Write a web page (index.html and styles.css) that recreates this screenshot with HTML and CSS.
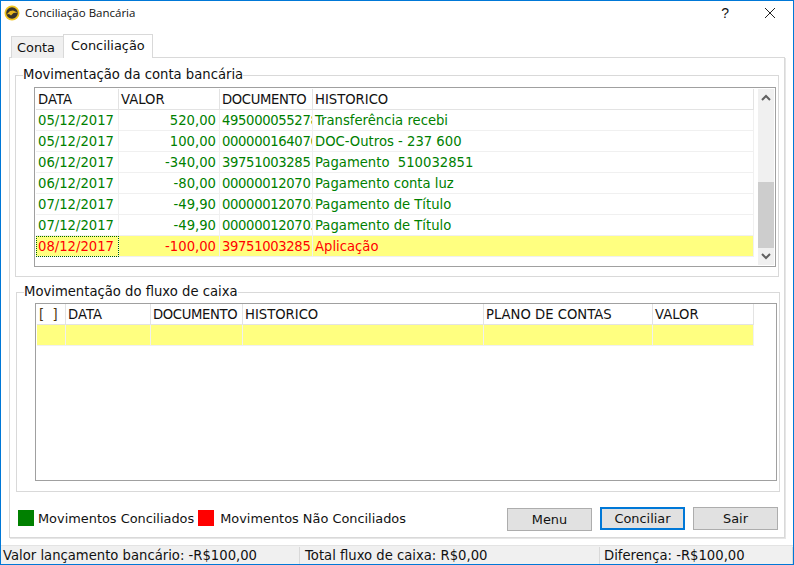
FILE: index.html
```html
<!DOCTYPE html>
<html lang="pt">
<head>
<meta charset="utf-8">
<title>Conciliação Bancária</title>
<link rel="stylesheet" href="styles.css">
</head>
<body>
<div class="window">
  <header class="titlebar">
    <svg class="app-icon" width="16" height="16" viewBox="0 0 16 16"><circle cx="8" cy="8" r="7.5" fill="#f0c41e"/><circle cx="8" cy="8" r="5.8" fill="#37332b"/><path d="M2.5 9.5 L6 6 L9 5.5 L13.5 7.5 L9.5 8 L7 10.5 L5 9 Z" fill="#e8b81c"/></svg>
    <span class="title">Conciliação Bancária</span>
    <span class="help">?</span>
    <svg class="close" width="10" height="10" viewBox="0 0 10 10"><path d="M0 0 L10 10 M10 0 L0 10" stroke="#222" stroke-width="1" fill="none"/></svg>
  </header>
  <div class="tabs">
    <div class="tab">Conta</div>
    <div class="tab active">Conciliação</div>
  </div>
  <main class="page">
    <fieldset class="group group-a">
      <legend>Movimentação da conta bancária</legend>
      <div class="grid grid-a">
        <div class="rows">
          <div class="row head"><span class="c a1">DATA</span><span class="c a2">VALOR</span><span class="c a3">DOCUMENTO</span><span class="c a4">HISTORICO</span></div>
          <div class="row ok"><span class="c a1">05/12/2017</span><span class="c a2 num">520,00</span><span class="c a3">49500005527885</span><span class="c a4">Transferência recebi</span></div>
          <div class="row ok"><span class="c a1">05/12/2017</span><span class="c a2 num">100,00</span><span class="c a3">00000016407600</span><span class="c a4">DOC-Outros - 237 600</span></div>
          <div class="row ok"><span class="c a1">06/12/2017</span><span class="c a2 num">-340,00</span><span class="c a3">39751003285</span><span class="c a4">Pagamento &nbsp;510032851</span></div>
          <div class="row ok"><span class="c a1">06/12/2017</span><span class="c a2 num">-80,00</span><span class="c a3">00000012070</span><span class="c a4">Pagamento conta luz</span></div>
          <div class="row ok"><span class="c a1">07/12/2017</span><span class="c a2 num">-49,90</span><span class="c a3">00000012070322</span><span class="c a4">Pagamento de Título</span></div>
          <div class="row ok"><span class="c a1">07/12/2017</span><span class="c a2 num">-49,90</span><span class="c a3">00000012070322</span><span class="c a4">Pagamento de Título</span></div>
          <div class="row bad"><span class="c a1 focus">08/12/2017</span><span class="c a2 num">-100,00</span><span class="c a3">39751003285</span><span class="c a4">Aplicação</span></div>
        </div>
        <div class="scrollbar">
          <svg class="arrow" width="16" height="17" viewBox="0 0 16 17"><path d="M4 11 L8 7 L12 11" stroke="#606060" stroke-width="2" fill="none"/></svg>
          <div class="track"><div class="thumb"></div></div>
          <svg class="arrow" width="16" height="17" viewBox="0 0 16 17"><path d="M4 6 L8 10 L12 6" stroke="#606060" stroke-width="2" fill="none"/></svg>
        </div>
      </div>
    </fieldset>
    <fieldset class="group group-b">
      <legend>Movimentação do fluxo de caixa</legend>
      <div class="grid grid-b">
        <div class="row head"><span class="c b1 brk">[&nbsp;&nbsp;]</span><span class="c b2">DATA</span><span class="c b3">DOCUMENTO</span><span class="c b4">HISTORICO</span><span class="c b5">PLANO DE CONTAS</span><span class="c b6">VALOR</span></div>
        <div class="row blank"><span class="c b1"></span><span class="c b2"></span><span class="c b3"></span><span class="c b4"></span><span class="c b5"></span><span class="c b6"></span></div>
      </div>
    </fieldset>
    <div class="footer">
      <span class="swatch green"></span><span class="legend-text">Movimentos Conciliados</span>
      <span class="swatch red"></span><span class="legend-text second">Movimentos Não Conciliados</span>
      <div class="buttons">
        <button class="btn menu">Menu</button>
        <button class="btn primary">Conciliar</button>
        <button class="btn">Sair</button>
      </div>
    </div>
  </main>
  <footer class="status">
    <span class="s s1">Valor lançamento bancário: -R$100,00</span>
    <span class="s s2">Total fluxo de caixa: R$0,00</span>
    <span class="s s3">Diferença: -R$100,00</span>
  </footer>
</div>
</body>
</html>
```
FILE: styles.css
```css
* { box-sizing: border-box; }
html, body { margin: 0; padding: 0; }
body { width: 794px; height: 565px; overflow: hidden; font-family: "DejaVu Sans", sans-serif; font-size: 13.2px; color: #111; }
.window { width: 794px; height: 565px; border: 1px solid #0078d7; background: #fff; display: flex; flex-direction: column; }
.titlebar { height: 26px; background: #fff; display: flex; align-items: center; padding: 0 18px 3px 3px; flex: none; }
.app-icon { flex: none; margin-right: 5px; }
.title { flex: 1; font-family: "Open Sans", sans-serif; font-size: 11.5px; }
.help { font-family: "Liberation Sans", sans-serif; font-size: 14px; margin-right: 36px; }
.tabs { height: 31px; display: flex; align-items: flex-end; padding-left: 10px; flex: none; margin-bottom: -1px; position: relative; z-index: 1; font-size: 12.9px; }
.tab { width: 53px; height: 22px; padding: 2px 0 0 5px; background: #f0f0f0; border: 1px solid #d9d9d9; border-bottom: none; line-height: 17px; }
.tab.active { width: 90px; height: 24px; background: #fff; padding: 2px 0 0 7px; margin-left: -1px; }
.page { flex: none; width: 776px; height: 481px; margin: 0 0 7px 8px; background: #fff; border: 1px solid #d9d9d9; box-shadow: 1px 1px 0 #e6e6e6; padding-left: 5px; display: flex; flex-direction: column; }
.group { margin: 0; padding: 0; border: 1px solid #d9d9d9; min-width: 0; width: 764px; background: #fff; }
.group legend { padding: 0; margin-left: 7px; line-height: 16px; }
.group-a { height: 210px; margin-top: 9px; }
.group-b { height: 208px; margin-top: 7px; margin-left: 1px; }
.grid { border: 1px solid #a0a0a0; background: #fff; width: 742px; margin: 3px 0 0 18px; }
.grid-a { display: flex; height: 180px; padding-top: 1px; margin-top: 4px; }
.grid-b { height: 178px; padding-left: 1px; }
.rows { flex: none; width: 719px; padding-left: 1px; }
.scrollbar { width: 16px; height: 176px; flex: none; margin-left: 4px; background: #f0f0f0; display: flex; flex-direction: column; }
.arrow { flex: none; display: block; }
.track { flex: 1; display: flex; flex-direction: column; justify-content: flex-end; }
.thumb { height: 66px; background: #cdcdcd; }
.row { display: flex; height: 21px; line-height: 22px; white-space: nowrap; }
.c { display: block; height: 21px; padding-left: 2px; overflow: hidden; border-right: 1px solid #f0f0f0; border-bottom: 1px solid #f0f0f0; flex: none; }
.head .c { border-right-color: #e3e3e3; border-bottom-color: #e3e3e3; }
.a1 { width: 83px; } .a2 { width: 101px; } .a3 { width: 93px; letter-spacing: -0.35px; } .a4 { width: 441px; }
.num { text-align: right; padding-right: 3px; }
.ok { color: #008000; }
.bad { color: #ff0000; }
.bad .c, .blank .c { background: #ffff80; }
.focus { outline: 1px dotted #006400; outline-offset: -1px; }
.b1 { width: 29px; } .b2 { width: 85px; } .b3 { width: 92px; letter-spacing: -0.35px; } .b4 { width: 241px; } .b5 { width: 169px; } .b6 { width: 101px; }
.brk { color: #4a3210; }
.footer { display: flex; align-items: center; height: 45px; padding-top: 7px; margin-left: 3px; font-size: 12.9px; }
.swatch { width: 16px; height: 16px; flex: none; }
.green { background: #008000; }
.red { background: #ff0000; }
.legend-text { margin: 0 4px; }
.second { margin-left: 6px; }
.buttons { margin-left: auto; display: flex; gap: 8px; margin-right: 6px; }
.btn { width: 85px; height: 23px; background: #e1e1e1; border: 1px solid #adadad; font: inherit; color: #111; padding: 0; }
.btn.menu { position: relative; top: 1px; }
.btn.primary { border: 2px solid #0078d7; }
.status { flex: 1; background: #f0f0f0; border-top: 1px solid #e3e3e3; display: flex; align-items: center; }
.s { height: 17px; line-height: 17px; border-right: 1px solid #d9d9d9; padding-left: 2px; flex: none; }
.s1 { width: 299px; } .s2 { width: 300px; padding-left: 5px; } .s3 { width: 193px; padding-left: 4px; }
```
